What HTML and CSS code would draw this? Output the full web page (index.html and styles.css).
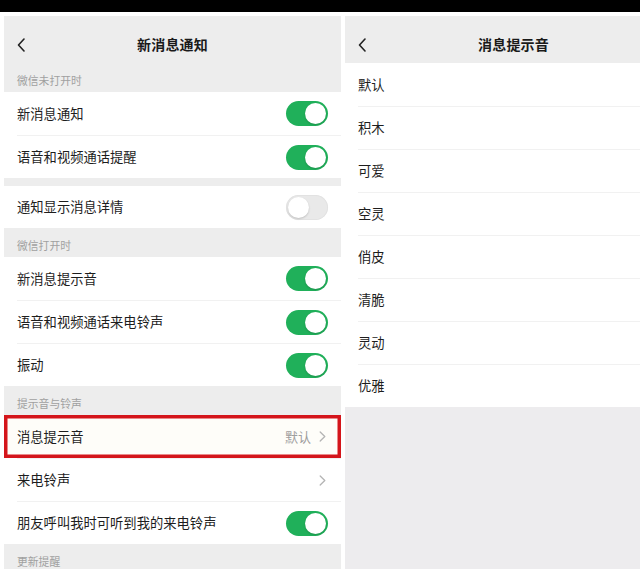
FILE: index.html
```html
<!DOCTYPE html>
<html lang="zh-CN">
<head>
<meta charset="utf-8">
<title>新消息通知</title>
<link rel="stylesheet" href="styles.css">
</head>
<body>
<div class="statusbar"></div>
<div class="screens">
  <section class="screen screen-left">
    <header class="navbar">
      <span class="back"><svg width="8" height="14" viewBox="0 0 8 14"><path d="M7 1 L1.5 7 L7 13" fill="none" stroke="#222" stroke-width="1.6" stroke-linecap="round" stroke-linejoin="round"/></svg></span>
      <h1 class="title">新消息通知</h1>
      <span></span>
    </header>
    <div class="group-label">微信未打开时</div>
    <ul class="cells">
      <li class="cell"><div class="cell-inner"><span class="cell-text">新消息通知</span><span class="switch on"></span></div></li>
      <li class="cell"><div class="cell-inner"><span class="cell-text">语音和视频通话提醒</span><span class="switch on"></span></div></li>
    </ul>
    <div class="group-gap"></div>
    <ul class="cells">
      <li class="cell short"><div class="cell-inner"><span class="cell-text">通知显示消息详情</span><span class="switch off"></span></div></li>
    </ul>
    <div class="group-label">微信打开时</div>
    <ul class="cells">
      <li class="cell"><div class="cell-inner"><span class="cell-text">新消息提示音</span><span class="switch on"></span></div></li>
      <li class="cell"><div class="cell-inner"><span class="cell-text">语音和视频通话来电铃声</span><span class="switch on"></span></div></li>
      <li class="cell"><div class="cell-inner"><span class="cell-text">振动</span><span class="switch on"></span></div></li>
    </ul>
    <div class="group-label">提示音与铃声</div>
    <ul class="cells">
      <li class="cell highlight"><div class="cell-inner"><span class="cell-text">消息提示音</span><span class="cell-value">默认<svg class="chev" width="7" height="11" viewBox="0 0 7 11"><path d="M1.2 1 L5.8 5.5 L1.2 10" fill="none" stroke="#b4b4b4" stroke-width="1.3" stroke-linecap="round" stroke-linejoin="round"/></svg></span></div></li>
      <li class="cell"><div class="cell-inner"><span class="cell-text">来电铃声</span><span class="cell-value"><svg class="chev" width="7" height="11" viewBox="0 0 7 11"><path d="M1.2 1 L5.8 5.5 L1.2 10" fill="none" stroke="#b4b4b4" stroke-width="1.3" stroke-linecap="round" stroke-linejoin="round"/></svg></span></div></li>
      <li class="cell"><div class="cell-inner"><span class="cell-text">朋友呼叫我时可听到我的来电铃声</span><span class="switch on"></span></div></li>
    </ul>
    <div class="group-label">更新提醒</div>
  </section>

  <section class="screen screen-right">
    <header class="navbar">
      <span class="back"><svg width="8" height="14" viewBox="0 0 8 14"><path d="M7 1 L1.5 7 L7 13" fill="none" stroke="#222" stroke-width="1.6" stroke-linecap="round" stroke-linejoin="round"/></svg></span>
      <h1 class="title">消息提示音</h1>
      <span></span>
    </header>
    <ul class="cells">
      <li class="cell"><div class="cell-inner"><span class="cell-text">默认</span></div></li>
      <li class="cell"><div class="cell-inner"><span class="cell-text">积木</span></div></li>
      <li class="cell"><div class="cell-inner"><span class="cell-text">可爱</span></div></li>
      <li class="cell"><div class="cell-inner"><span class="cell-text">空灵</span></div></li>
      <li class="cell"><div class="cell-inner"><span class="cell-text">俏皮</span></div></li>
      <li class="cell"><div class="cell-inner"><span class="cell-text">清脆</span></div></li>
      <li class="cell"><div class="cell-inner"><span class="cell-text">灵动</span></div></li>
      <li class="cell"><div class="cell-inner"><span class="cell-text">优雅</span></div></li>
    </ul>
  </section>
</div>
</body>
</html>
```

FILE: styles.css
```css
* { box-sizing: border-box; }

html, body {
  margin: 0;
  padding: 0;
  width: 640px;
  height: 569px;
  overflow: hidden;
  background: #ffffff;
  font-family: "Noto Sans CJK SC", "Noto Sans", sans-serif;
  color: #1d1d1d;
}

.statusbar {
  height: 12px;
  background: #000;
}

.screens {
  display: flex;
  gap: 4px;
  padding: 4px 0 0 4px;
  height: 557px;
  width: 640px;
  overflow: hidden;
}

.screen {
  flex: 0 0 337px;
  width: 337px;
  height: 553px;
  background: #ededed;
  overflow: hidden;
}

.screen-right {
  background: #edecee;
}

.navbar {
  height: 47px;
  padding-top: 9px;
  display: grid;
  grid-template-columns: 1fr auto 1fr;
  align-items: center;
  background: #ededed;
}

.back {
  justify-self: start;
  padding-left: 13px;
  display: flex;
  align-items: center;
  padding-top: 1px;
}

.title {
  margin: 0;
  font-size: 14px;
  font-weight: 700;
  color: #1a1a1a;
  letter-spacing: 0.2px;
}

.group-label {
  height: 29px;
  padding: 10px 13px 0;
  font-size: 10.8px;
  line-height: 14px;
  color: #a0a0a0;
}

.group-gap {
  height: 8px;
}

.cells {
  list-style: none;
  margin: 0;
  padding: 0;
  background: #fff;
}

.cell {
  padding-left: 13px;
  background: #fff;
}

.cell-inner {
  height: 43px;
  display: flex;
  align-items: center;
  justify-content: space-between;
  padding-right: 13px;
  border-top: 1px solid #f1f1f1;
}

.cell:first-child .cell-inner {
  border-top: none;
}

.cell.short .cell-inner {
  height: 42px;
}

.cell-text {
  font-size: 13.3px;
  line-height: 18px;
}

.cell-value {
  display: flex;
  align-items: center;
  gap: 8px;
  font-size: 13px;
  color: #9e9e9e;
  padding-right: 2px;
}

.chev {
  display: block;
}

.highlight {
  background: #fefdf9;
  box-shadow: inset 0 0 0 3.5px #d4151b;
}

.highlight .cell-inner {
  border-top: none;
}

.switch {
  width: 42px;
  height: 25px;
  border-radius: 13px;
  display: flex;
  align-items: center;
  padding: 0 2px;
  flex: 0 0 auto;
}

.switch::after {
  content: "";
  width: 21px;
  height: 21px;
  border-radius: 50%;
  background: #fff;
  box-shadow: 0 1px 2px rgba(0, 0, 0, 0.18);
}

.switch.on {
  background: #20b05a;
  justify-content: flex-end;
}

.switch.off {
  background: #e9e9e9;
  justify-content: flex-start;
  box-shadow: inset 0 0 0 1px #e2e2e2;
}
```
